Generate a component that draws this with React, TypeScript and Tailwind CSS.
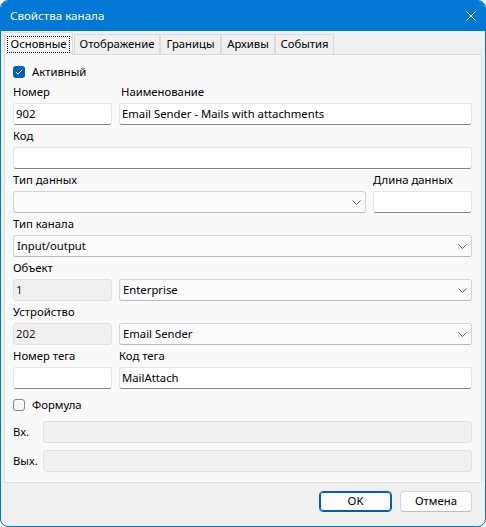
import React from "react";

const font = { fontFamily: '"Noto Sans", "Segoe UI", sans-serif' };

const Chevron = () => (
  <svg width="9" height="5" viewBox="0 0 9 5" className="shrink-0">
    <path d="M0.5 0.5 L4.5 4.5 L8.5 0.5" fill="none" stroke="#606060" strokeWidth="1" />
  </svg>
);

const Input = ({ value = "", className = "" }: { value?: string; className?: string }) => (
  <div
    className={
      "h-[22px] flex items-center px-[2px] bg-white border border-[#e5e5e5] border-b-[#868686] rounded-[3px] whitespace-nowrap " +
      className
    }
  >
    {value}
  </div>
);

const Disabled = ({ value = "", className = "" }: { value?: string; className?: string }) => (
  <div
    className={
      "h-[22px] flex items-center px-[2px] bg-[#f0f0f0] border border-[#e2e2e2] rounded-[3px] text-[#1a1a1a] " +
      className
    }
  >
    {value}
  </div>
);

const Combo = ({ value = "", className = "" }: { value?: string; className?: string }) => (
  <div
    className={
      "h-[22px] flex items-center justify-between pl-[3px] pr-[4px] bg-[#fbfbfb] border border-[#d3d3d3] border-b-[#b8b8b8] rounded-[3px] " +
      className
    }
  >
    <span>{value}</span>
    <Chevron />
  </div>
);

const Label = ({ children, className = "" }: { children?: React.ReactNode; className?: string }) => (
  <div className={"h-[22px] flex items-center " + className}>{children}</div>
);

const Check = ({ checked }: { checked: boolean }) =>
  checked ? (
    <div className="w-[12px] h-[12px] rounded-[3px] bg-[#005fb8] flex items-center justify-center">
      <svg width="8" height="6" viewBox="0 0 8 6">
        <path d="M0.8 3 L3 5 L7.2 0.8" fill="none" stroke="#ffffff" strokeWidth="1" />
      </svg>
    </div>
  ) : (
    <div className="w-[12px] h-[12px] rounded-[3px] border border-[#8a8a8a] bg-[#f6f6f6]" />
  );

const tabs = [
  { name: "Отображение", w: "w-[86px] ml-[1px]" },
  { name: "Границы", w: "w-[61px]" },
  { name: "Архивы", w: "w-[54px]" },
  { name: "События", w: "w-[59px]" },
];

export default function App() {
  return (
    <div
      className="w-[486px] h-[527px] rounded-[8px] overflow-hidden border border-[#0078d4] bg-[#f0f0f0] text-[11.3px] text-black flex flex-col"
      style={font}
    >
      {/* title bar */}
      <div className="h-[30px] bg-[#0078d4] flex items-center justify-between pl-[9px] pr-[9px] text-white text-[11.6px] shrink-0">
        <span>Свойства канала</span>
        <svg width="10" height="10" viewBox="0 0 10 10">
          <path d="M0.5 0.5 L9.5 9.5 M9.5 0.5 L0.5 9.5" stroke="#ffffff" strokeWidth="1" />
        </svg>
      </div>

      {/* tabs */}
      <div className="pt-[1px] h-[23px] flex items-end pl-[3px] shrink-0">
        <div className="w-[69px] h-[23px] bg-[#f9f9f9] border border-b-0 border-[#dcdcdc] flex items-center justify-center relative top-[1px] z-10">
          <span className="border border-dotted border-black px-[3px] h-[17px] flex items-center">Основные</span>
        </div>
        {tabs.map((t) => (
          <div
            key={t.name}
            className={
              "h-[20px] bg-[#f0f0f0] border border-b-0 border-[#dcdcdc] flex items-center justify-center " + t.w
            }
          >
            {t.name}
          </div>
        ))}
      </div>

      {/* page */}
      <div className="mx-[3px] h-[429px] bg-[#f9f9f9] border border-[#dcdcdc] pl-[8px] pr-[9px] pt-[8px] shrink-0">
        <div className="h-[18px] flex items-center gap-[7px]">
          <Check checked />
          <span>Активный</span>
        </div>

        <div className="flex gap-[7px]">
          <div className="w-[99px] flex flex-col">
            <Label>Номер</Label>
            <Input value="902" />
          </div>
          <div className="flex-1 flex flex-col">
            <Label className="pl-[2px]">Наименование</Label>
            <Input value="Email Sender - Mails with attachments" />
          </div>
        </div>

        <Label>Код</Label>
        <Input />

        <div className="flex gap-[7px]">
          <div className="flex-1 flex flex-col">
            <Label>Тип данных</Label>
            <Combo />
          </div>
          <div className="w-[99px] flex flex-col">
            <Label>Длина данных</Label>
            <Input />
          </div>
        </div>

        <Label>Тип канала</Label>
        <Combo value="Input/output" />

        <Label>Объект</Label>
        <div className="flex gap-[7px]">
          <Disabled value="1" className="w-[99px]" />
          <Combo value="Enterprise" className="flex-1" />
        </div>

        <Label>Устройство</Label>
        <div className="flex gap-[7px]">
          <Disabled value="202" className="w-[99px]" />
          <Combo value="Email Sender" className="flex-1" />
        </div>

        <div className="flex gap-[7px]">
          <div className="w-[99px] flex flex-col">
            <Label>Номер тега</Label>
            <Input />
          </div>
          <div className="flex-1 flex flex-col">
            <Label>Код тега</Label>
            <Input value="MailAttach" />
          </div>
        </div>

        <div className="h-[32px] flex items-center gap-[7px]">
          <Check checked={false} />
          <span>Формула</span>
        </div>

        <div className="flex items-center">
          <span className="w-[30px]">Вх.</span>
          <Disabled className="flex-1" />
        </div>
        <div className="flex items-center mt-[7px]">
          <span className="w-[30px]">Вых.</span>
          <Disabled className="flex-1" />
        </div>
      </div>

      {/* buttons */}
      <div className="flex-1 flex justify-end items-start pt-[8px] pr-[13px] gap-[8px]">
        <button className="w-[73px] h-[21px] rounded-[4px] border border-[#005fb8] outline outline-1 outline-[#005fb8] outline-offset-[-2px] bg-[#fdfdfd] flex items-center justify-center">
          OK
        </button>
        <button className="w-[72px] h-[21px] rounded-[4px] border border-[#d5d5d5] border-b-[#bdbdbd] bg-[#fdfdfd] flex items-center justify-center">
          Отмена
        </button>
      </div>
    </div>
  );
}
